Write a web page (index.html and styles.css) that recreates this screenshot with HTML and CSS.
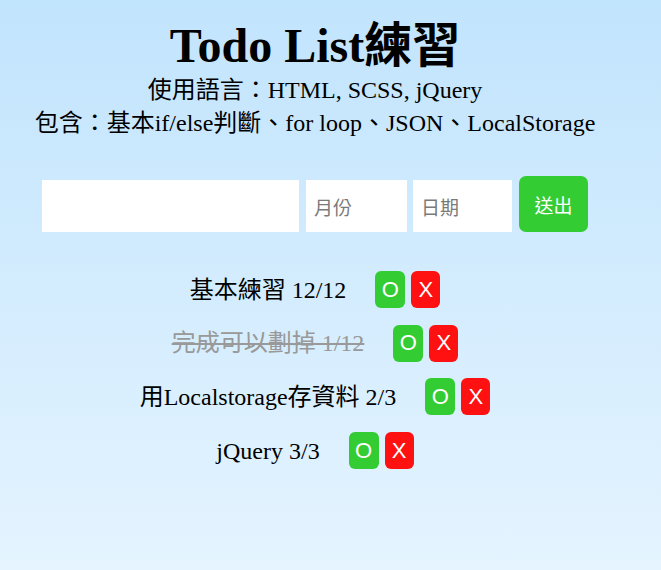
FILE: index.html
```html
<!DOCTYPE html>
<html lang="zh-Hant">
<head>
<meta charset="utf-8">
<title>Todo List練習</title>
<link rel="stylesheet" href="styles.css">
</head>
<body>
<div class="wrap">
  <header class="head">
    <h1 class="title">Todo List練習</h1>
    <p class="sub">使用語言：HTML, SCSS, jQuery</p>
    <p class="sub">包含：基本if/else判斷、for loop、JSON、LocalStorage</p>
  </header>
  <form class="form">
    <input class="inp inp-text" type="text">
    <input class="inp inp-month" type="text" placeholder="月份">
    <input class="inp inp-day" type="text" placeholder="日期">
    <button class="send" type="button">送出</button>
  </form>
  <ul class="list">
    <li class="item"><span class="txt">基本練習 12/12</span><span class="btns"><button class="b ok" type="button">O</button><button class="b del" type="button">X</button></span></li>
    <li class="item"><span class="txt done">完成可以劃掉 1/12</span><span class="btns"><button class="b ok" type="button">O</button><button class="b del" type="button">X</button></span></li>
    <li class="item"><span class="txt">用Localstorage存資料 2/3</span><span class="btns"><button class="b ok" type="button">O</button><button class="b del" type="button">X</button></span></li>
    <li class="item"><span class="txt">jQuery 3/3</span><span class="btns"><button class="b ok" type="button">O</button><button class="b del" type="button">X</button></span></li>
  </ul>
</div>
</body>
</html>
```
FILE: styles.css
```css
html, body {
  margin: 0;
  padding: 0;
}
body {
  min-height: 570px;
  background: linear-gradient(180deg, #c1e4fd 0%, #e5f4ff 100%);
  font-family: "Liberation Serif", "Noto Sans CJK TC", serif;
  color: #000;
}
.wrap {
  width: 630px;
}
.head {
  text-align: center;
  padding-top: 18px;
}
.title {
  margin: 0;
  font-size: 48px;
  line-height: 56px;
  font-weight: bold;
}
.sub {
  margin: 0;
  font-size: 24px;
  line-height: 33px;
}
.form {
  display: flex;
  align-items: flex-end;
  justify-content: center;
  margin-top: 36px;
}
.inp {
  height: 52px;
  box-sizing: border-box;
  border: none;
  background: #fff;
  padding: 0 8px;
  font-family: "Noto Sans CJK TC", "Liberation Sans", sans-serif;
  font-size: 19px;
  outline: none;
}
.inp::placeholder {
  color: #7a7a7a;
}
.inp-text { width: 257px; margin-right: 7px; }
.inp-month { width: 101px; margin-right: 6px; }
.inp-day { width: 99px; margin-right: 7px; }
.send {
  width: 69px;
  height: 56px;
  border: none;
  border-radius: 7px;
  background: #33cc33;
  color: #fff;
  font-family: "Noto Sans CJK TC", "Liberation Sans", sans-serif;
  font-size: 19px;
  padding: 0;
}
.list {
  list-style: none;
  margin: 39px 0 0;
  padding: 0;
  display: flex;
  flex-direction: column;
  gap: 16.7px;
}
.item {
  display: flex;
  justify-content: center;
  align-items: center;
  gap: 29px;
  height: 37px;
}
.txt {
  font-size: 24px;
  line-height: 30px;
}
.txt.done {
  color: #999;
  text-decoration: line-through;
}
.btns {
  display: flex;
  gap: 6px;
}
.b {
  height: 37px;
  border: none;
  border-radius: 6px;
  color: #fff;
  font-family: "Liberation Sans", sans-serif;
  font-size: 22px;
  padding: 0;
}
.ok { width: 30px; background: #33cc33; }
.del { width: 29px; background: #ff1111; }
```
